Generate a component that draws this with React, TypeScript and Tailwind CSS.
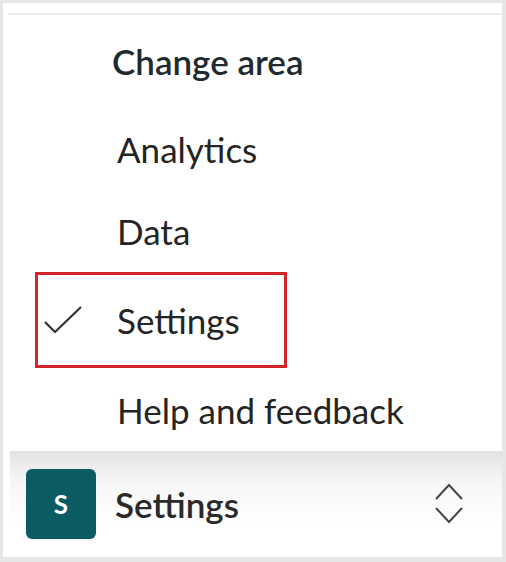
import React from "react";

const items = ["Analytics", "Data"];

function Check() {
  return (
    <svg width="40" height="30" viewBox="0 0 40 30" className="shrink-0">
      <polyline
        points="2,17 12,27 38,2"
        fill="none"
        stroke="#333"
        strokeWidth="2.2"
        strokeLinejoin="round"
      />
    </svg>
  );
}

function UpDown() {
  return (
    <svg width="30" height="46" viewBox="0 0 30 46">
      <polyline points="2,18 15,4 28,18" fill="none" stroke="#444" strokeWidth="2" />
      <polyline points="2,27 15,41 28,27" fill="none" stroke="#444" strokeWidth="2" />
    </svg>
  );
}

export default function App() {
  return (
    <div
      className="w-[506px] h-[562px] bg-white border-l-[3px] border-t-[3px] border-r-4 border-b-[5px] border-[#e6e6e6] flex flex-col text-[#242424]"
      style={{ fontFamily: "Lato, 'Open Sans', sans-serif" }}
    >
      <div className="mt-[10px] ml-[5px] h-[2px] bg-[#ececec]" />

      <div className="h-[92px] flex items-center pl-[109px] text-[35px] leading-none font-semibold text-[#1f2a30]">
        Change area
      </div>

      <div className="h-[84px] flex items-center pl-[114px] text-[35px] leading-none">
        {items[0]}
      </div>
      <div className="h-[80px] flex items-center pl-[114px] text-[35px] leading-none">
        {items[1]}
      </div>

      <div className="h-[98px] flex items-center">
        <div className="ml-[32px] w-[252px] h-[96px] border-[3px] border-[#d2242b] flex items-center pl-[5px]">
          <Check />
          <span className="ml-[34px] text-[35px] leading-none">Settings</span>
        </div>
      </div>

      <div className="h-[82px] flex items-center pl-[114px] text-[35px] leading-none">
        Help and feedback
      </div>

      <div className="flex-1 ml-[7px] flex items-center bg-[linear-gradient(to_bottom,#e2e2e2,#f7f7f7_30%,#ffffff_70%)]">
        <div className="ml-[16px] w-[70px] h-[70px] rounded-[6px] bg-[#0b5c62] flex items-center justify-center text-white text-[26px] font-bold leading-none">
          S
        </div>
        <span className="ml-[19px] text-[35px] leading-none font-semibold text-[#2a2a2a]">Settings</span>
        <div className="ml-auto mr-[38px] flex items-center">
          <UpDown />
        </div>
      </div>
    </div>
  );
}
